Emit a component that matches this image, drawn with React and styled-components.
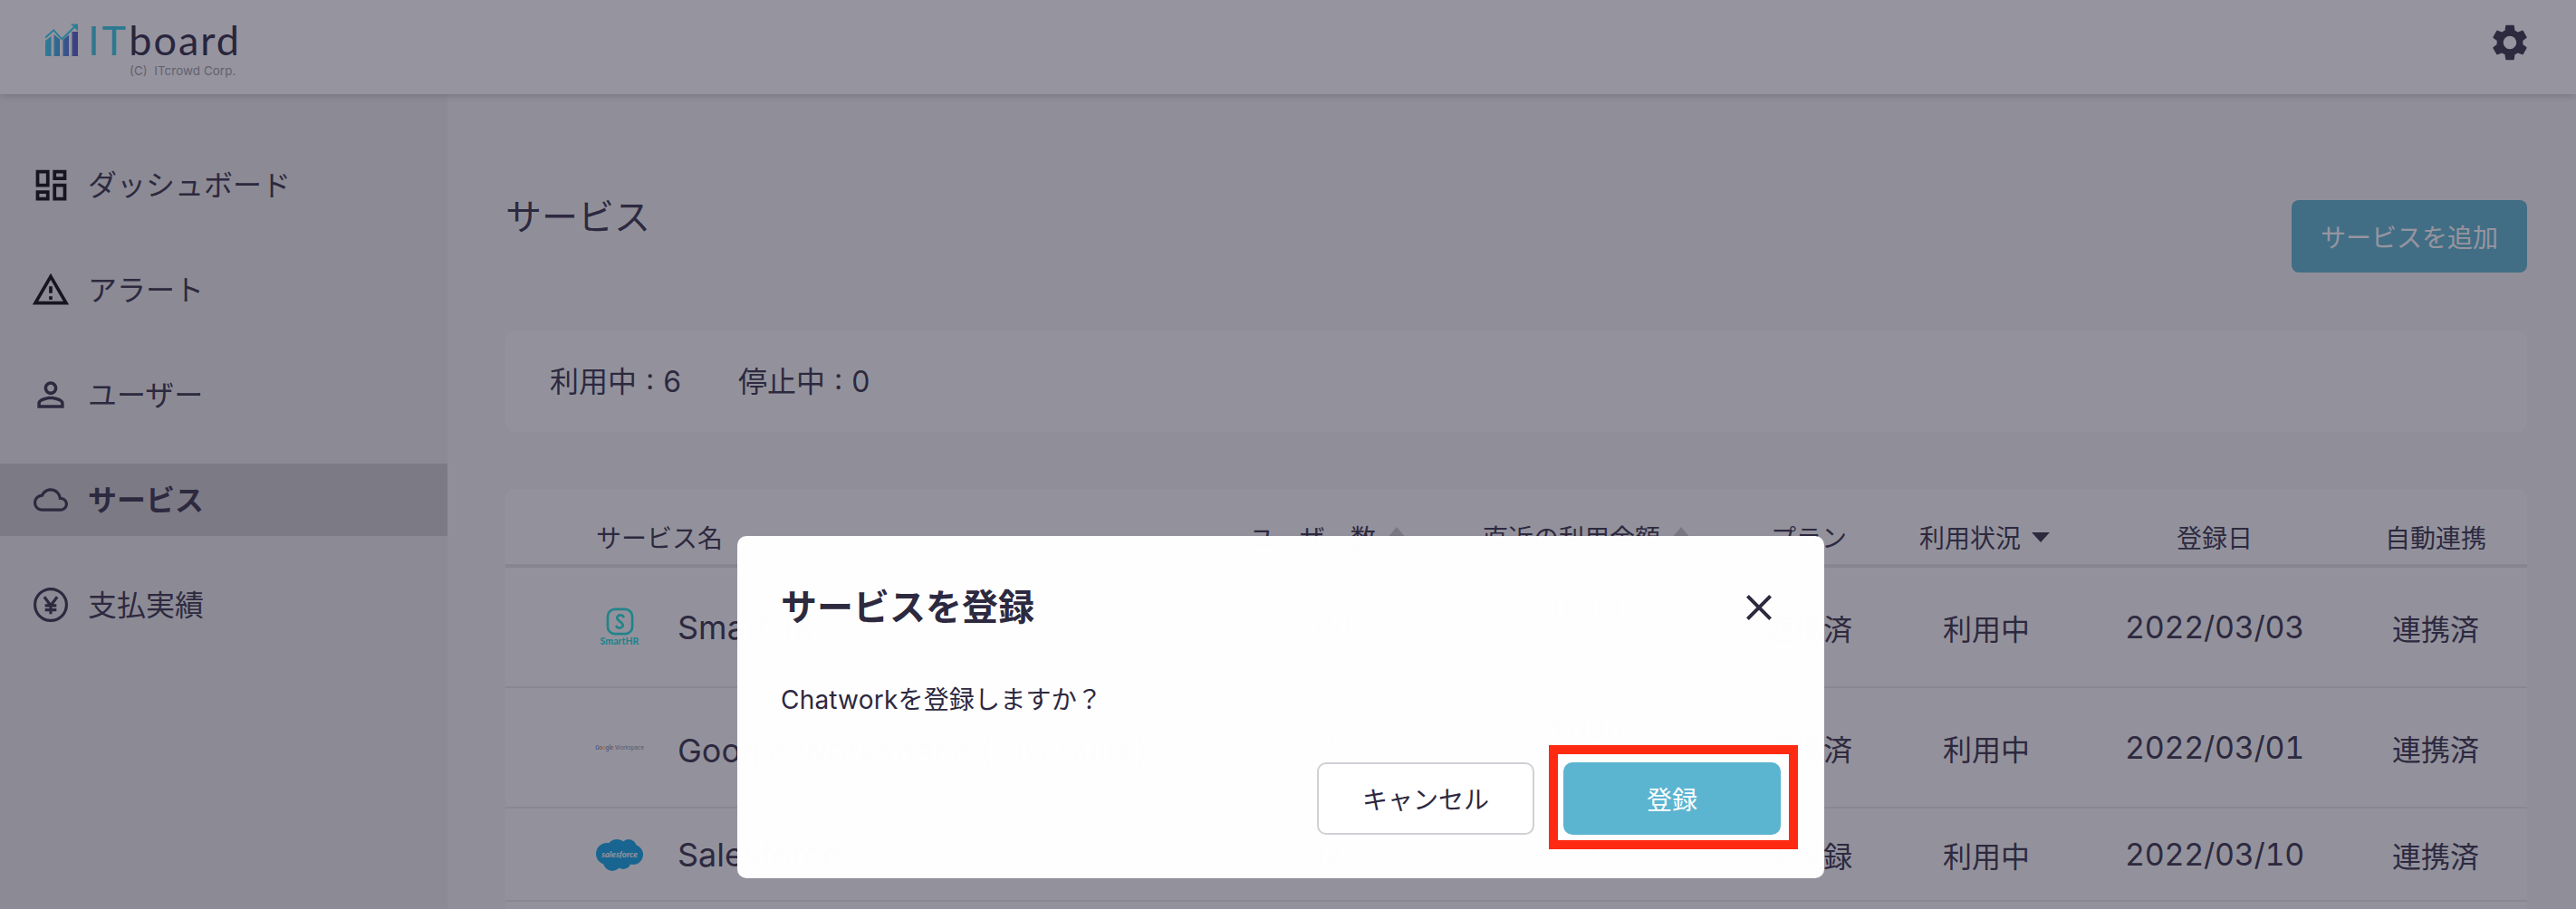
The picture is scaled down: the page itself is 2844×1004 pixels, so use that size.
import React from 'react';
import styled, { createGlobalStyle } from 'styled-components';

const INK = '#2d293f';
const FONT = '"Inter", "Noto Sans CJK JP", sans-serif';

const Global = createGlobalStyle`
  html, body { margin: 0; padding: 0; height: 100%; overflow: hidden; background: #f3f5f3; }
  body { font-family: ${FONT}; color: ${INK}; }
  * { box-sizing: border-box; }
`;

const Page = styled.div`
  position: relative;
  width: 2844px;
  height: 1004px;
  overflow: hidden;
  display: flex;
  flex-direction: column;
`;

const TopBar = styled.header`
  position: relative;
  z-index: 2;
  flex: none;
  height: 104px;
  background: #fff;
  box-shadow: 0 2px 8px rgba(45, 41, 63, 0.25);
  display: flex;
  align-items: flex-start;
  justify-content: space-between;
  padding: 26px 49px 0 50px;
`;

const Brand = styled.div`
  display: flex;
  flex-direction: column;
`;

const BrandRow = styled.div`
  display: flex;
  align-items: flex-end;
  height: 36px;
  gap: 11px;
`;

const BrandName = styled.div`
  font-family: "Lato", sans-serif;
  font-size: 45px;
  line-height: 36px;
  letter-spacing: 2px;
  color: #24203a;
  white-space: nowrap;
  height: 36px;
  span { color: #2bc8e0; letter-spacing: 3px; }
`;

const Copy = styled.div`
  font-size: 13.500px;
  line-height: 16px;
  margin: 8px 0 0 93px;
  color: #97999d;
  white-space: pre;
`;

const Gear = styled.svg`
  width: 48px;
  height: 48px;
  fill: ${INK};
  margin-top: -3px;
`;

const Body = styled.div`
  flex: 1;
  display: flex;
  min-height: 0;
`;

const Sidebar = styled.nav`
  flex: none;
  width: 494px;
  background: #ebedeb;
  padding-top: 60px;
  display: flex;
  flex-direction: column;
  gap: 36px;
`;

const NavItem = styled.div`
  height: 80px;
  display: flex;
  align-items: center;
  padding-left: 28px;
  gap: 13px;
  font-size: 32px;
  font-weight: ${p => (p.$active ? 700 : 400)};
  background: ${p => (p.$active ? '#cbcdcb' : 'transparent')};
`;

const NavIconBox = styled.span`
  width: 56px;
  height: 56px;
  display: flex;
  align-items: center;
  justify-content: center;
`;

const NavLabel = styled.span`
  margin-top: -4px;
`;

const NavSvg = styled.svg`
  width: ${p => p.$size}px;
  height: ${p => p.$size}px;
  fill: ${p => p.$color || INK};
`;

const YenSvg = styled.svg`
  width: 38px;
  height: 38px;
  fill: none;
  stroke: ${INK};
  stroke-width: 2;
`;

const Main = styled.main`
  flex: 1;
  min-width: 0;
  padding: 108px 54px 0 64px;
  display: flex;
  flex-direction: column;
`;

const TitleRow = styled.div`
  display: flex;
  justify-content: space-between;
  align-items: flex-start;
`;

const Title = styled.h1`
  margin: 0;
  font-size: 40px;
  line-height: 56px;
  font-weight: 400;
`;

const AddButton = styled.button`
  width: 260px;
  height: 80px;
  margin-top: 9px;
  border: 0;
  border-radius: 8px;
  background: #55b3cb;
  color: #fff;
  font: 400 28px ${FONT};
`;

const SummaryCard = styled.section`
  margin-top: 64px;
  height: 112px;
  padding: 0 0 4px 49px;
  background: #f9fbf9;
  border-radius: 10px;
  display: flex;
  align-items: center;
  gap: 63px;
  font-size: 32px;
  word-spacing: 1px;
`;

const TableCard = styled.section`
  margin-top: 63px;
  flex: 1;
  background: #f9fbf9;
  border-radius: 10px 10px 0 0;
  overflow: hidden;
`;

const COLS = '784px 248px 324px 166px 222px 286px 202px';

const HeadRow = styled.div`
  display: grid;
  grid-template-columns: ${COLS};
  height: 87px;
  padding: 27px 0 4px;
  align-items: center;
  border-bottom: 4px solid #e0e2e0;
  font-size: 28px;
`;

const HeadCell = styled.div`
  display: flex;
  align-items: center;
  justify-content: ${p => (p.$left ? 'flex-start' : 'center')};
  padding-left: ${p => (p.$left ? '100px' : '0')};
  gap: 12px;
  white-space: nowrap;
`;

const SortMark = styled.span`
  width: 0;
  height: 0;
  border-left: 11px solid transparent;
  border-right: 11px solid transparent;
  ${p =>
    p.$down
      ? `border-top: 11px solid ${INK};
         border-left-width: 10px;
         border-right-width: 10px;`
      : 'border-bottom: 13px solid #c4c4c8; margin-top: -10px;'}
`;

const Row = styled.div`
  display: grid;
  grid-template-columns: ${COLS};
  height: ${p => p.$h}px;
  align-items: center;
  border-bottom: 2px solid #e4e6e4;
  font-size: 32px;
`;

const NameCell = styled.div`
  display: flex;
  align-items: center;
  padding-left: 100px;
  gap: 38px;
  white-space: nowrap;
  font-size: 36px;
`;

const LogoBox = styled.div`
  flex: none;
  width: 52px;
  height: 44px;
  display: flex;
  flex-direction: column;
  align-items: center;
  justify-content: center;
`;

const SmartGlyph = styled.svg`
  flex: none;
  width: 31px;
  height: 31px;
  fill: none;
  stroke: #18dcd6;
  stroke-width: 2.800;
  stroke-linecap: round;
`;

const SmartWord = styled.span`
  font: 900 10.500px/11px "Lato", sans-serif;
  color: #18dcd6;
  margin-top: 1px;
`;

const GoogleWord = styled.div`
  font: 400 6.400px/10px "Roboto", sans-serif;
  color: #8a8d92;
  white-space: nowrap;
`;

const GoogleLetter = styled.span`
  font-weight: 500;
  color: ${p => p.$c};
`;

const CloudSvg = styled.svg`
  flex: none;
  width: 52px;
  height: 36px;
`;

const Cell = styled.div`
  text-align: center;
  white-space: nowrap;
  padding-bottom: ${p => (p.$raised ? '40px' : '0')};
  padding-left: ${p => (p.$nudge ? '4px' : '0')};
`;

const DateCell = styled(Cell)`
  font-size: 34px;
  letter-spacing: -0.3px;
  font-variant-numeric: tabular-nums;
`;

const Overlay = styled.div`
  position: absolute;
  inset: 0;
  z-index: 5;
  background: rgba(45, 41, 63, 0.5);
`;

const Modal = styled.div`
  position: absolute;
  left: 814px;
  top: 592px;
  width: 1200px;
  height: 378px;
  padding: 50px 48px 48px 48px;
  background: rgba(255, 255, 255, 0.993);
  border-radius: 10px;
  display: flex;
  flex-direction: column;
`;

const ModalHead = styled.div`
  display: flex;
  align-items: center;
  justify-content: space-between;
`;

const ModalTitle = styled.h2`
  margin: 0;
  font-size: 40px;
  line-height: 58px;
  font-weight: 700;
`;

const CloseSvg = styled.svg`
  width: 48px;
  height: 48px;
  fill: ${INK};
`;

const ModalText = styled.p`
  margin: 53px 0 0;
  font-size: 28px;
  line-height: 40px;
  letter-spacing: 0.2px;
`;

const Actions = styled.div`
  margin-top: 49px;
  display: flex;
  justify-content: flex-end;
  gap: 32px;
`;

const CancelButton = styled.button`
  width: 240px;
  height: 80px;
  background: #fff;
  border: 2px solid #d0d0d5;
  border-radius: 10px;
  color: ${INK};
  font: 400 28px ${FONT};
`;

const ConfirmWrap = styled.div`
  position: relative;
`;

const ConfirmButton = styled.button`
  width: 240px;
  height: 80px;
  background: #5bb5d0;
  border: 0;
  border-radius: 10px;
  color: #fff;
  font: 400 28px ${FONT};
`;

const RedFrame = styled.span`
  position: absolute;
  left: -16px;
  top: -19px;
  right: -19px;
  bottom: -16px;
  border: 10px solid #ff2a12;
  pointer-events: none;
`;

const Smart = () => (
  <LogoBox>
    <SmartGlyph viewBox="0 0 32 32">
      <rect x="2" y="2" width="28" height="28" rx="8" />
      <path d="M20 10.500c-1-2.200-5.500-2.600-7 0-1.400 2.600 1 4 3 5.500s4.400 3 3 5.500c-1.500 2.600-6 2.200-7 0" />
    </SmartGlyph>
    <SmartWord>SmartHR</SmartWord>
  </LogoBox>
);

const googleLetters = [
  ['G', '#5a8ce8'], ['o', '#e8685a'], ['o', '#f0c040'], ['g', '#5a8ce8'], ['l', '#4fb068'], ['e', '#e8685a'],
];

const Google = () => (
  <LogoBox>
    <GoogleWord>
      {googleLetters.map(([l, c], i) => <GoogleLetter key={i} $c={c}>{l}</GoogleLetter>)} Workspace
    </GoogleWord>
  </LogoBox>
);

const Sales = () => (
  <LogoBox>
    <CloudSvg viewBox="0 0 52 36">
      <g fill="#00a1e0">
        <circle cx="12" cy="17" r="12" />
        <circle cx="23" cy="12" r="11" />
        <circle cx="36" cy="10" r="9" />
        <circle cx="41" cy="18" r="11" />
        <circle cx="30" cy="25" r="9" />
        <circle cx="18" cy="26" r="10" />
      </g>
      <text x="26" y="20.500" textAnchor="middle" fontFamily="Lato, sans-serif" fontSize="9.500" fontStyle="italic" fontWeight="700" fill="#fff">salesforce</text>
    </CloudSvg>
  </LogoBox>
);

const rows = [
  { h: 133, Logo: Smart, name: 'SmartHR', users: '100', amount: '10,000', raised: true, plan: '連携済', date: '2022/03/03' },
  { h: 133, Logo: Google, name: 'Google Workspace (旧G Suite)', users: '3', amount: '1,000', raised: true, plan: '連携済', date: '2022/03/01' },
  { h: 103, Logo: Sales, name: 'Salesforce', users: '12', amount: '0', raised: false, plan: '未登録', date: '2022/03/10' },
];

export default function App() {
  return (
    <Page>
      <Global />
      <TopBar>
        <Brand>
          <BrandRow>
            <svg width="36" height="36" viewBox="0 0 36 36">
              <defs>
                <linearGradient id="logoBars" x1="0" x2="1" y1="0" y2="0">
                  <stop offset="0" stopColor="#2bd3ed" />
                  <stop offset="1" stopColor="#4d4fc1" />
                </linearGradient>
              </defs>
              <path fill="url(#logoBars)" d="M0 19l6.500-5V36H0zM9.500 12l6.500 5.500V36H9.500zM19.500 18l6.500-5.500V36h-6.500zM29.500 9H36V36h-6.500z" />
              <path d="M0 15.700l9.300-8.400 9 10L33 3" fill="none" stroke="#2bd3ed" strokeWidth="2" />
              <path d="M28 .500h8v8z" fill="#2bd3ed" />
            </svg>
            <BrandName><span>IT</span>board</BrandName>
          </BrandRow>
          <Copy>{'(C)  ITcrowd Corp.'}</Copy>
        </Brand>
        <Gear viewBox="0 0 24 24">
          <path d="M19.140 12.940c.04-.3.06-.61.06-.94 0-.32-.02-.64-.07-.94l2.030-1.580c.18-.14.23-.41.12-.61l-1.920-3.320c-.12-.22-.37-.29-.59-.22l-2.390.96c-.5-.38-1.030-.7-1.620-.94l-.36-2.540c-.04-.24-.24-.41-.48-.41h-3.840c-.24 0-.43.17-.47.41l-.36 2.540c-.59.24-1.130.57-1.620.94l-2.390-.96c-.22-.08-.47 0-.59.22L2.740 8.870c-.12.21-.08.47.12.61l2.030 1.580c-.05.3-.09.63-.09.94s.02.64.07.94l-2.030 1.580c-.18.14-.23.41-.12.61l1.920 3.320c.12.22.37.29.59.22l2.390-.96c.5.38 1.030.7 1.620.94l.36 2.540c.05.24.24.41.48.41h3.840c.24 0 .44-.17.47-.41l.36-2.540c.59-.24 1.130-.56 1.620-.94l2.390.96c.22.08.47 0 .59-.22l1.920-3.320c.12-.22.07-.47-.12-.61l-2.010-1.580zM12 15.600c-1.980 0-3.600-1.620-3.600-3.600s1.620-3.600 3.600-3.600 3.600 1.620 3.600 3.600-1.620 3.600-3.600 3.600z" />
        </Gear>
      </TopBar>
      <Body>
        <Sidebar>
          <NavItem>
            <NavIconBox>
              <NavSvg $size={45} $color="#000" viewBox="0 0 24 24"><path d="M19 5v2h-4V5h4M9 5v6H5V5h4m10 8v6h-4v-6h4M9 17v2H5v-2h4M21 3h-8v6h8V3zM11 3H3v10h8V3zm10 8h-8v10h8V11zm-10 4H3v6h8v-6z" /></NavSvg>
            </NavIconBox>
            <NavLabel>ダッシュボード</NavLabel>
          </NavItem>
          <NavItem>
            <NavIconBox>
              <NavSvg $size={44} $color="#000" viewBox="0 0 24 24"><path d="M12 5.990L19.530 19H4.470L12 5.990M12 2L1 21h22L12 2zm1 14h-2v2h2v-2zm0-6h-2v4h2v-4z" /></NavSvg>
            </NavIconBox>
            <NavLabel>アラート</NavLabel>
          </NavItem>
          <NavItem>
            <NavIconBox>
              <NavSvg $size={44} viewBox="0 0 24 24"><path d="M12 5.900c1.160 0 2.100.94 2.100 2.100s-.94 2.100-2.100 2.100S9.900 9.160 9.900 8s.94-2.100 2.100-2.100m0 9c2.970 0 6.100 1.460 6.100 2.100v1.100H5.900V17c0-.64 3.130-2.100 6.100-2.100M12 4C9.790 4 8 5.790 8 8s1.790 4 4 4 4-1.790 4-4-1.790-4-4-4zm0 9c-2.670 0-8 1.340-8 4v3h16v-3c0-2.660-5.330-4-8-4z" /></NavSvg>
            </NavIconBox>
            <NavLabel>ユーザー</NavLabel>
          </NavItem>
          <NavItem $active>
            <NavIconBox>
              <NavSvg $size={38} viewBox="0 0 24 24"><path d="M12 6c2.620 0 4.880 1.860 5.390 4.430l.3 1.500 1.530.11c1.560.1 2.780 1.410 2.780 2.960 0 1.650-1.350 3-3 3H6c-2.210 0-4-1.790-4-4 0-2.050 1.530-3.760 3.560-3.970l1.070-.11.5-.95C8.080 7.140 9.940 6 12 6m0-2C9.110 4 6.600 5.640 5.350 8.040 2.340 8.360 0 10.910 0 14c0 3.310 2.690 6 6 6h13c2.760 0 5-2.240 5-5 0-2.640-2.050-4.780-4.650-4.960C18.670 6.590 15.640 4 12 4z" /></NavSvg>
            </NavIconBox>
            <NavLabel>サービス</NavLabel>
          </NavItem>
          <NavItem>
            <NavIconBox>
              <YenSvg viewBox="0 0 24 24">
                <circle cx="12" cy="12" r="11" />
                <path d="M7.500 6.500L12 12.500l4.500-6M12 12.500V18.500M8 12.500h8M8 15.500h8" />
              </YenSvg>
            </NavIconBox>
            <NavLabel>支払実績</NavLabel>
          </NavItem>
        </Sidebar>
        <Main>
          <TitleRow>
            <Title>サービス</Title>
            <AddButton>サービスを追加</AddButton>
          </TitleRow>
          <SummaryCard>
            <span>利用中 : 6</span>
            <span>停止中 : 0</span>
          </SummaryCard>
          <TableCard>
            <HeadRow>
              <HeadCell $left>サービス名</HeadCell>
              <HeadCell>ユーザー数<SortMark /></HeadCell>
              <HeadCell>直近の利用金額<SortMark /></HeadCell>
              <HeadCell>プラン</HeadCell>
              <HeadCell>利用状況<SortMark $down /></HeadCell>
              <HeadCell>登録日</HeadCell>
              <HeadCell>自動連携</HeadCell>
            </HeadRow>
            {rows.map(({ h, Logo, name, users, amount, raised, plan, date }) => (
              <Row key={name} $h={h}>
                <NameCell><Logo />{name}</NameCell>
                <Cell>{users}</Cell>
                <Cell $raised={raised}>{amount}</Cell>
                <Cell>{plan}</Cell>
                <Cell $nudge>利用中</Cell>
                <DateCell>{date}</DateCell>
                <Cell>連携済</Cell>
              </Row>
            ))}
          </TableCard>
        </Main>
      </Body>
      <Overlay>
        <Modal>
          <ModalHead>
            <ModalTitle>サービスを登録</ModalTitle>
            <CloseSvg viewBox="0 0 24 24"><path d="M19 6.410L17.590 5 12 10.590 6.410 5 5 6.410 10.590 12 5 17.590 6.410 19 12 13.410 17.590 19 19 17.590 13.410 12z" /></CloseSvg>
          </ModalHead>
          <ModalText>Chatworkを登録しますか？</ModalText>
          <Actions>
            <CancelButton>キャンセル</CancelButton>
            <ConfirmWrap>
              <ConfirmButton>登録</ConfirmButton>
              <RedFrame />
            </ConfirmWrap>
          </Actions>
        </Modal>
      </Overlay>
    </Page>
  );
}
